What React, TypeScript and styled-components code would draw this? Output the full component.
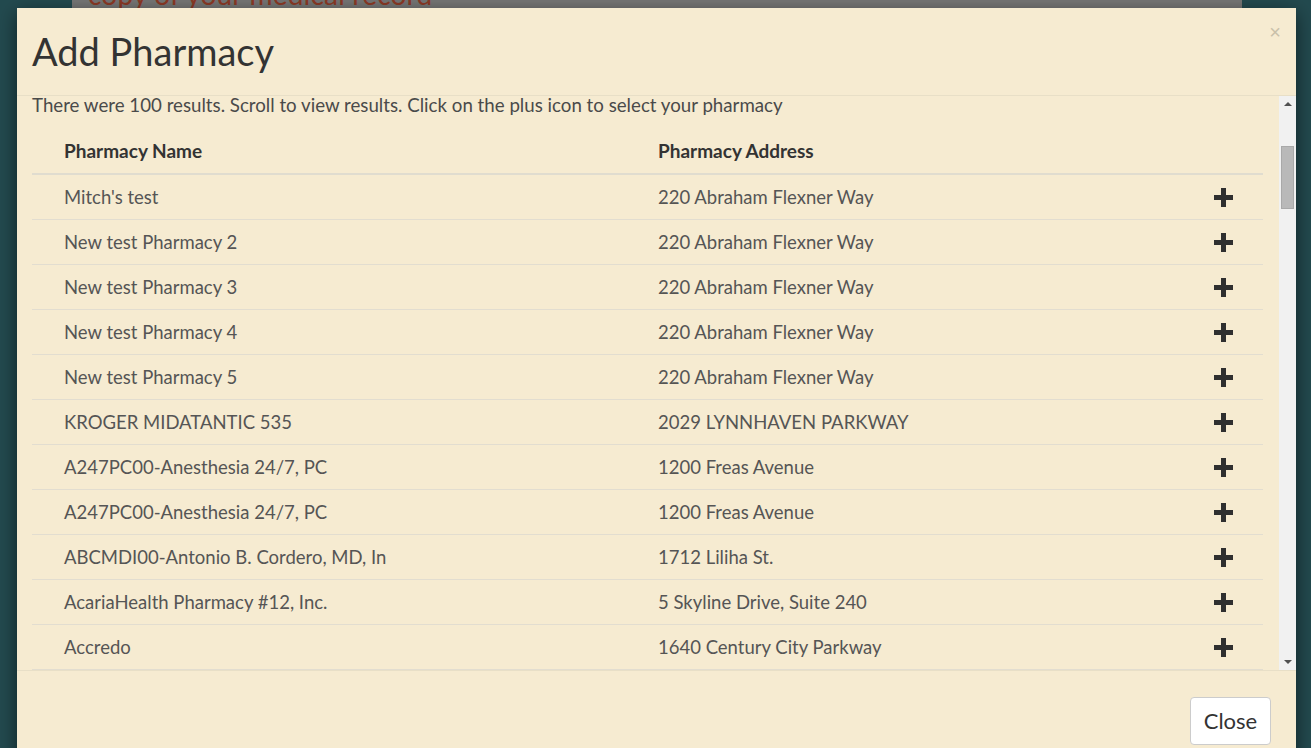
import styled, { createGlobalStyle } from 'styled-components'

const GlobalStyle = createGlobalStyle`
  html, body { margin: 0; padding: 0; }
  body {
    width: 1311px;
    height: 748px;
    overflow: hidden;
    background: #234a4f;
    font-family: Lato, "Open Sans", sans-serif;
  }
  * { box-sizing: border-box; }
`

const rows = [
  ['Mitch\'s test', '220 Abraham Flexner Way'],
  ['New test Pharmacy 2', '220 Abraham Flexner Way'],
  ['New test Pharmacy 3', '220 Abraham Flexner Way'],
  ['New test Pharmacy 4', '220 Abraham Flexner Way'],
  ['New test Pharmacy 5', '220 Abraham Flexner Way'],
  ['KROGER MIDATANTIC 535', '2029 LYNNHAVEN PARKWAY'],
  ['A247PC00-Anesthesia 24/7, PC', '1200 Freas Avenue'],
  ['A247PC00-Anesthesia 24/7, PC', '1200 Freas Avenue'],
  ['ABCMDI00-Antonio B. Cordero, MD, In', '1712 Liliha St.'],
  ['AcariaHealth Pharmacy #12, Inc.', '5 Skyline Drive, Suite 240'],
  ['Accredo', '1640 Century City Parkway'],
  ['Advanced Care Pharmacy', '1010 Main Street'],
]

// ---| Page behind the backdrop |-------------------------------

const Page = styled.div`
  position: relative;
  width: 1311px;
  height: 748px;
  overflow: hidden;
`

const BackCard = styled.div`
  margin: -26px 69px 0 72px;
  height: 40px;
  background: #777776;
  padding: 0 16px;
  overflow: hidden;
`

const BackText = styled.div`
  font-family: Lato, sans-serif;
  font-size: 28px;
  letter-spacing: 0.2px;
  line-height: 40px;
  color: #8d3a26;
  white-space: nowrap;
`

// ---| Modal |--------------------------------------------------

const Modal = styled.div`
  position: absolute;
  top: 8px;
  left: 17px;
  width: 1279px;
  height: 780px;
  background: #f6ebd1;
  box-shadow: 0 5px 18px rgba(0, 0, 0, 0.55);
  display: flex;
  flex-direction: column;
`

const Header = styled.div`
  position: relative;
  height: 88px;
  padding: 0 15px;
  border-bottom: 1px solid #e8dfc7;
  display: flex;
  align-items: center;
`

const Title = styled.h4`
  margin: 0 0 2px;
  font-size: 38px;
  font-weight: 400;
  color: #333;
`

const CloseX = styled.button`
  position: absolute;
  top: 14px;
  right: 15px;
  border: 0;
  background: transparent;
  padding: 0;
  font-size: 20px;
  line-height: 20px;
  color: #c9c0aa;
  font-family: "Liberation Sans", sans-serif;
`

const Body = styled.div`
  height: 574px;
  display: flex;
  overflow: hidden;
`

const Content = styled.div`
  flex: 1;
  padding: 0 16px 0 15px;
  overflow: hidden;
`

const Intro = styled.p`
  margin: -1px 0 14px;
  font-size: 18.7px;
  line-height: 20px;
  color: #4a4a4a;
  white-space: nowrap;
`

const Table = styled.div`
  width: 100%;
`

const Row = styled.div<{ $head?: boolean }>`
  display: grid;
  grid-template-columns: 594px 1fr 72px;
  height: ${p => (p.$head ? '46px' : '45px')};
  border-bottom: ${p => (p.$head ? '2px solid #e0dccf' : '1px solid #e2ddd0')};
  align-items: center;
`

const Cell = styled.div<{ $head?: boolean }>`
  padding-left: 32px;
  font-size: ${p => (p.$head ? '19px' : '18.5px')};
  line-height: 24px;
  font-weight: ${p => (p.$head ? 700 : 400)};
  color: ${p => (p.$head ? '#333' : '#555')};
  white-space: nowrap;
  overflow: hidden;
`

const PlusCell = styled.div`
  display: flex;
  justify-content: flex-start;
  padding-left: 23px;
`

const Track = styled.div`
  width: 17px;
  height: 100%;
  background: #f1f1f1;
  display: flex;
  flex-direction: column;
  align-items: center;
`

const Arrow = styled.div<{ $down?: boolean }>`
  width: 0;
  height: 0;
  margin: ${p => (p.$down ? 'auto 0 6px' : '6px 0 0')};
  border-left: 4px solid transparent;
  border-right: 4px solid transparent;
  ${p => (p.$down ? 'border-top: 4px solid #505050;' : 'border-bottom: 4px solid #505050;')}
`

const Thumb = styled.div`
  margin-top: 40px;
  width: 13px;
  height: 63px;
  background: #b9b9b9;
  border: 1px solid #a9a9a9;
`

const Footer = styled.div`
  border-top: 1px solid #e8dfc7;
  padding: 26px 25px 0 0;
  display: flex;
  justify-content: flex-end;
`

const Button = styled.button`
  width: 81px;
  height: 48px;
  padding: 0 0 2px;
  background: #fff;
  border: 1px solid #ccc;
  border-radius: 4px;
  font-family: Lato, "Open Sans", sans-serif;
  font-size: 22px;
  color: #333;
`

const Plus = () => (
  <svg width="19" height="19" viewBox="0 0 19 19">
    <rect x="7" y="0" width="5" height="19" fill="#2f2f2f" />
    <rect x="0" y="7" width="19" height="5" fill="#2f2f2f" />
  </svg>
)

export default function App() {
  return (
    <>
      <GlobalStyle />
      <Page>
        <BackCard>
          <BackText>copy of your medical record</BackText>
        </BackCard>
        <Modal>
          <Header>
            <Title>Add Pharmacy</Title>
            <CloseX>×</CloseX>
          </Header>
          <Body>
            <Content>
              <Intro>There were 100 results. Scroll to view results. Click on the plus icon to select your pharmacy</Intro>
              <Table>
                <Row $head>
                  <Cell $head>Pharmacy Name</Cell>
                  <Cell $head>Pharmacy Address</Cell>
                  <div />
                </Row>
                {rows.map((r, i) => (
                  <Row key={i}>
                    <Cell>{r[0]}</Cell>
                    <Cell>{r[1]}</Cell>
                    <PlusCell><Plus /></PlusCell>
                  </Row>
                ))}
              </Table>
            </Content>
            <Track>
              <Arrow />
              <Thumb />
              <Arrow $down />
            </Track>
          </Body>
          <Footer>
            <Button>Close</Button>
          </Footer>
        </Modal>
      </Page>
    </>
  )
}
